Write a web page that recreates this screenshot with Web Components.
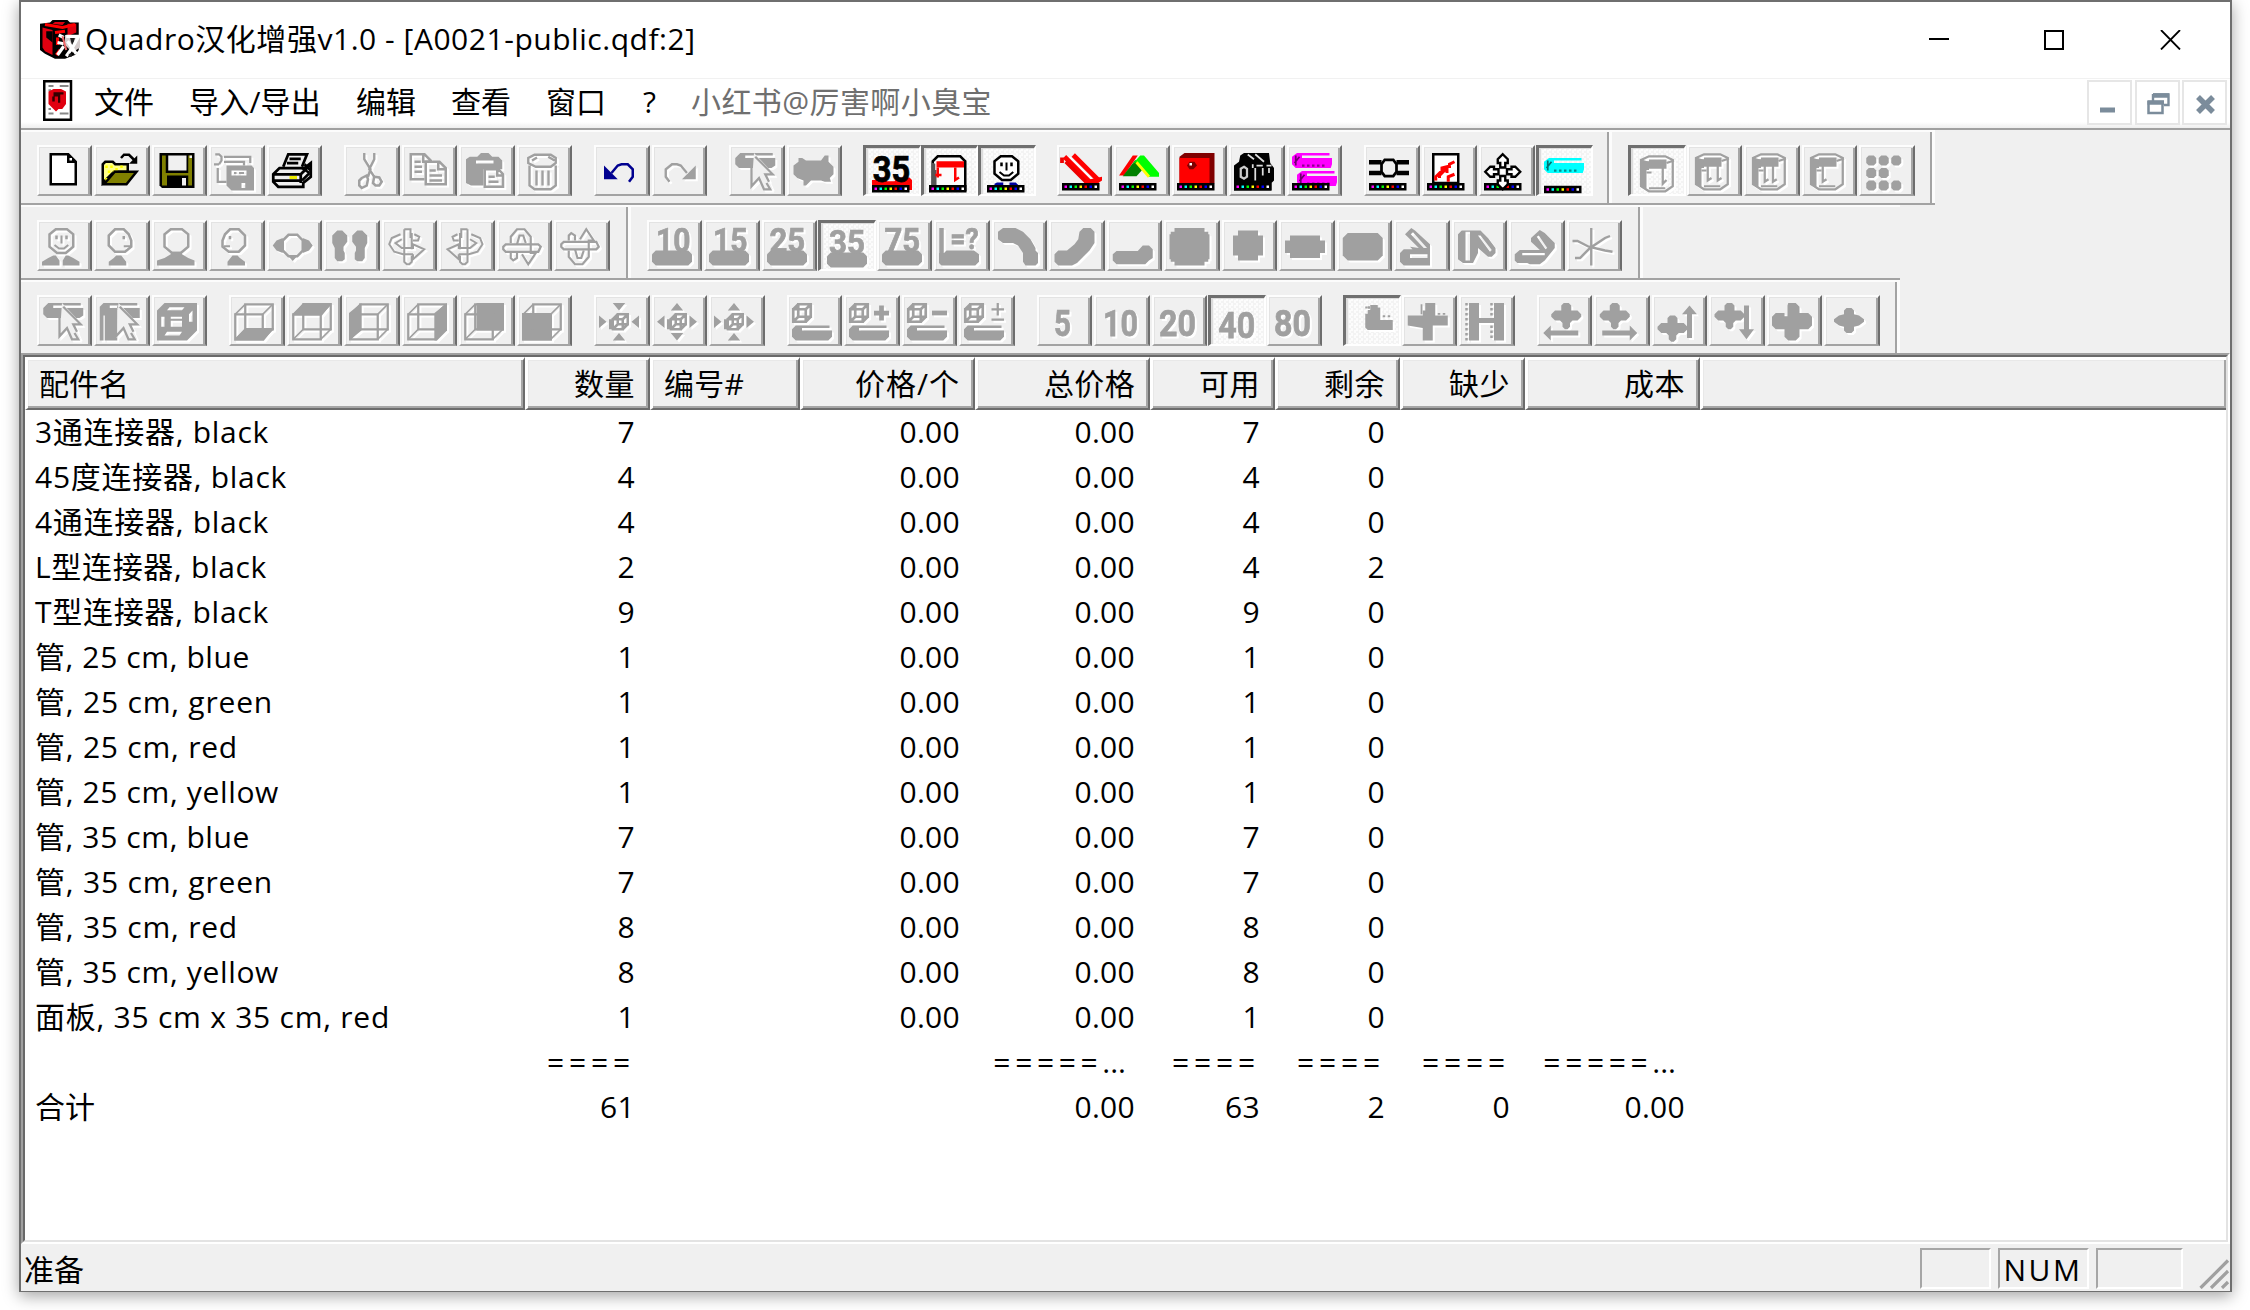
<!DOCTYPE html>
<html lang="zh-CN">
<head>
<meta charset="utf-8">
<title>Quadro汉化增强v1.0 - [A0021-public.qdf:2]</title>
<style>
html,body{margin:0;height:1310px;overflow:hidden;background:#fff}
body{font-family:"Open Sans","Noto Sans CJK SC",sans-serif;font-size:30px;color:#000}
app-window{margin-left:19px}
</style>
</head>
<body>
<app-window>
  <title-bar caption="Quadro汉化增强v1.0 - [A0021-public.qdf:2]"></title-bar>
  <menu-strip></menu-strip>
  <rebar-row style="--w:1914px">
    <tool-band style="--w:1586px" items="new open save saveall! print | cut! copy! paste! trash! | undo redo! | pick! blob! | len35* panel* person* | slide roof block wheel tubes | joint sheet spread tube*"></tool-band>
    <tool-band style="--w:318px;--p:17px" items="bucket1!* bucket2! bucket3! bucket4! dots!"></tool-band>
  </rebar-row>
  <rebar-row style="--w:1879px">
    <tool-band style="--w:604.5px" items="front! right! back! left! top! feet! roty! roty2! rotx! rotx2!"></tool-band>
    <tool-band style="--w:1007.5px;--p:16px" items="n10! n15! n25! n35!* n75! nq! bend1! bend2! bend3! sq1! sq2! sq3! sq4! k1! k2! k3! star!"></tool-band>
  </rebar-row>
  <rebar-row style="--w:1879px" last>
    <tool-band style="--w:1874px" items="pick! pick2! cube0! | cbottom! ctop! cleft! cright! cback! cfront! | zin! zout! zmix! | t0! tplus! tminus! tpm! | g5! g10! g20! g40!* g80! | corner!* cross! hshape! | mleft! mright! mup! mdown! mbig! msmall!"></tool-band>
  </rebar-row>
  <parts-list></parts-list>
  <status-bar></status-bar>
</app-window>

<script>
const make = (name, html, init) => customElements.define(name, class extends HTMLElement {
  constructor(){ super(); this.attachShadow({mode:'open'}); }
  connectedCallback(){ this.shadowRoot.innerHTML = typeof html === 'function' ? html(this) : html; if(init) init(this, this.shadowRoot); }
});

/* Spreads the letters of a label so that it takes a given width. */
const fit = root => root.querySelectorAll('[data-fit]').forEach(el => {
  const n = [...el.textContent].length, want = +el.dataset.fit;
  el.style.letterSpacing = '0';
  const w = el.getBoundingClientRect().width;
  const s = (want - w) / n;
  el.style.letterSpacing = s + 'px';
});

/* ---- icon set: 16x15 grid ---- */
const S = (d, w=1, c='currentColor') => `<path d="${d}" fill="none" stroke="${c}" stroke-width="${w}"/>`;
const F = (d, c='currentColor') => `<path d="${d}" fill="${c}" fill-rule="evenodd"/>`;
const FS = (d, f, c='currentColor', w=1) => `<path d="${d}" fill="${f}" stroke="${c}" stroke-width="${w}"/>`;
const T = (t, x, y, size, w) => `<text x="${x}" y="${y}" font-family="Roboto,sans-serif" font-weight="700" font-size="${size}" textLength="${w}" lengthAdjust="spacingAndGlyphs" fill="currentColor" stroke="currentColor" stroke-width=".3">${t}</text>`;
const G = (t, s) => `<g transform="${t}">${s}</g>`;
const R = (dx, s) => G(`translate(${dx} 0)`, s);
const flipX = s => G('translate(15.5 0) scale(-1 1)', s);
const strip = () => F('M0 12H15V15H0Z','#000') + ['#f0f','#0ff','#0f0','#ff0','#f00','#00f','#fff'].map((c,i)=>F(`M${1+2*i} 13h1v1h-1z`,c)).join('');
const base = F('M1.5 9H14.5L16 10.5V13.5L14.5 15H1.5L0 13.5V10.5Z');
const cubeWire = S('M.5 4.5H11.5V14.5H.5ZM4.5.5H15.5V10.5H4.5Z',.9) + S('M.5 4.5L4.5.5M11.5 4.5L15.5.5M.5 14.5L4.5 10.5M11.5 14.5L15.5 10.5',.7);
const cursor = '<path d="M7.500 0L16 9H12.500L15 14.500H11.500L10 10.500L6.500 14Z" fill="#f0f0f0" stroke="none"/>' + S('M6.5 2V13.3L9.5 10L11.5 14.5H14L12.5 12M8 1.5L15 8.5H12L13.5 11.5',.9);
const mini = S('M5.5 6.5H9.5V10.5H5.5ZM7.5 4.5H11.5V8.5H7.5ZM5.5 6.5L7.5 4.5M9.5 6.5L11.5 4.5M9.5 10.5L11.5 8.5M5.5 10.5L7.5 8.5M4.5 6.5V10.5',1);
const tubeBase = F('M1.5 9H15V10H4V11H16V13.5L14.5 15H1.5L0 13.5V10.5Z');
const smallCube = S('M.5 2.5H5.5V7.5H.5ZM2.5.5H7.5V5.5H2.5ZM.5 2.5L2.5.5M5.5 2.5L7.5.5M5.5 7.5L7.5 5.5M.5 7.5L2.5 5.5',1.05);
const head = 'M5.5.5H10L12.5 2.5V7.5L9.5 10H6L3 7.5V2.5Z';
const blobPlus = (x,y) => F(`M${x+5} ${y}h2l1 1v2h2.5l1.5 1.5v1l-1.5 1.5h-2l-1 1v1.5l-1 1h-1l-1-1v-1.5l-1-1h-2l-1.5-1.5v-1l1.5-1.5h2.5v-2z`);
const bucket = inner => R(.8, S('M4 .5H10.5L13.5 2V12.5L10.5 14.5H4L.8 12.5V2Z',.9) + F('M.5 2.5H4V6H3V13.5L.5 12.5Z') + F('M4 1.8H11V5.5H4Z') + S('M1 2.2L4 3.2M11 3.2L14 2.2M4 13.3H10.5M3 7H5',.8) + inner);
const person = S(head) + F('M5.3 3h1v1.5h-1zM9.3 3h1v1.5h-1z') + S('M7.8 3V6.2M5 6.8L6.8 8.2H8.8L10.5 6.8',.8);
const tubeC = (y,c) => F(`M2 ${y}H15V${y+1}H4V${y+2}H16V${y+4.5}L15.5 ${y+6}H1.500L0 ${y+4.5}V${y+1.5}Z`,c) + S(`M4 ${y+5}h1m1 0h1m1 0h1m1 0h1m1 0h1`,.9,'#00000070') + S(`M1.5 ${y+1}V${y+5}M3 ${y+1.5}L1 ${y+4}`,.7,'#00000090');
const rot = S('M6.5.5H9V4M6.5.5V4M6.5 11V13.5L7.5 14.5H8.5L9.5 13.5V11M6.5 2V11M9.5 2V8.5',.8) + S('M5 2.5L1.5 4L.5 6.5L2.5 9.5L6 10.5H10M5.5 4.500L3 6L5.5 8H10V6.5L14.5 8.5L10 12.5V10.5M10.5 2.5L12.5 3.5L12 5H10',.8);
const rotH = S('M1.5 6.5H14.5L15.5 7.5L14.5 9.5H1.5L.5 8.5V7.5Z',.9)+S('M3.5 6V3.5L6 .5H9L11.5 3.5V10H13.5L10.5 14.5L8 10.5M6 6.5L7 3H8.5L9.5 6M3.5 10V12L4.5 13L6 12V10',.85);
const profile = R(.4, S('M6 .5H9.5L11.5 2.5L12.5 5V7.5L10 9.5H6L3.5 7V3Z')+F('M9 3.2h1v1.3h-1z')+S('M9.5 7.3H12',.8)+F('M3.5 15V13.5L5.5 12L6.5 11H8.5L10.5 13.5V15Z'));

const ICONS = {
  new: FS('M3.5.5H10.5L13.5 3.5V12.5H3.5Z','#fff')+F('M10 0L14 4H10Z')+F('M11 2h1v1h-1z','#fff'),
  open: S('M8.8 2L10 .7H12L14 2.7')+F('M15.3 1V4.3H12Z')+FS('M1.5 12V4.5L2.5 3.5H5.5L6.5 4.5H11.5V7.5H6Z','#ff8')+F('M2.5 5h1v1h-1zm2 0h1v1h-1zm2 1h1v1h-1zm2-1h1v1h-1zm-5 2h1v1h-1zm0 3h-1v1h1zm2-3h1v1h-1z','#ff0')+FS('M2 12.5L6.3 7.5H15L11 12.5Z','#808000'),
  save: F('M1 0H15V14H2L1 13Z')+F('M2 1H14V13H2Z','#808000')+F('M3.5 0H12.5V8H3.500ZM4 9H12.5V14H4Z')+F('M4.5 1H11.8V7H4.500ZM10 10h1.6v3H10ZM13 1h1v1h-1z','#f0f0f0'),
  saveall: S('M.5.5H2L3 1.5V3L2 4.5M0 4.5h2M4 1.5H14.5V4M1.5 6V11.5H5M4 3.5H12V5',.9)+F('M5 5H15L16 6V15H7L5 13ZM7 7H13V9H7ZM11 12H12.5V14H11Z')+S('M8 8h1m1 0h2',.8),
  print: S('M4.5 5.5L6.5.5H14L12 5.5M7 2.3H11.5M6 4H10.5',1.1)+FS('M.5 8.5L3 6H13L15.5 4V9.5L12.5 12V13.5H2.5L.5 11.5Z','#f0f0f0','#000',1.1)+S('M.5 8.5H11.5L15 5M.5 11H12M11.5 8.5V12',1.1)+F('M7 9.2h3v1.2H7z','#ee0')+S('M12 6L15 8M13 4.5L15.5 7M12 11L15 8',1),
  cut: R(.6,S('M5.5 0V2.5L8 6.5L7 9.5M9.5 0V2.5L7.5 6.5L9.5 9.5',.95)+S('M4.5 10L6.5 9L7 10.5L6.5 13L4.5 14L3.5 13V11ZM9.5 9.5L11.5 9.8L12.5 11.5L11.5 13L10 13L9 12Z')),
  copy: R(1,S('M6 10.5H.5V.5H6L8.5 3V4M2 3.5H4.500M2 5.5H5M2 7.5H5M5.5.5V3.5H8',1)+S('M6.5 3.5H12L14.5 6V12.5H6.5ZM11.5 3.5V6.5H14.5M8 7H10.5M8 9H13M8 11H13',1)),
  paste: R(.8,F('M1.500 1.500H4.5L6 0H9L10.5 1.5H13L14.500 3V6.500H7V13H2L0 12V2.5ZM4 3V4.2H11V3Z')+S('M7.5 6.500H13L14.8 8.5V13.5H7.5ZM9 9.5H11.5M9 11.5H13M12.500 6.5V9H14.5')),
  trash: R(1,S('M4 .7H10.500L12.5 2V4L10.5 5.5H4.5L1.5 4V2ZM2 5V13L4 14.5H10.500L12.500 13V5M4.8 7V13M7.2 7V13M9.6 7V13M3 3L5 1.8M9.500 1.5L12 3',.95)),
  undo: F('M2 5V10.5H7.5Z','#000090')+S('M5 8L7.5 5L9 4.5H11.5L13.5 6.5V9.5L12 11.5',1,'#000090'),
  redo: R(1,F('M14.500 5V10.5H9Z')+S('M11 8L8.5 5L7 4.5H5L2.500 6.5V9.5L4 11.5',.95)),
  pick: R(.5,F('M2 0H15V1H4V2H16V5L14.5 6H1.5L0 4.5V2Z')+cursor),
  pick2: R(.3,F('M1.5 0H15V1H4V2H16V6H12L7 1V15H2V5H1.5V15H0V1.5Z')+cursor),
  blob: R(.6,F('M2 2H3.5L5 3H11L12.5 1H14V3.5L16 5.5V8.5L14.5 10L15 11.5H12.5L11 11H7L5 13H4V11L1.5 10L0 8.5V5L2 3.5Z')),
  len35: F('M0 10H2L3 9H5L6 10.5H9L10 9H15L16 10V14H0Z','#f00')+T('35',.3,10.7,14.9,15)+strip(),
  panel: FS('M3.5 .5H12.5L14.5 2.5V14H1.5V2.500Z','#fbfbfb')+F('M3 2.5H14V5H3Z','#f00')+F('M1 3V12H3V6H2.5V3.5Z','#555')+S('M3.5 5V9M2.5 8H5M10.5 5V10L12 9',1,'#f00')+strip(),
  person: person.replace(/currentColor/g,'#000').replace('fill="none"','fill="#fff"')+F('M3 12V11.5L4 11H6.5V12ZM9 12V11H11.5L12.5 12Z','#0000a0')+strip(),
  slide: S('M1 1.5L12 12.5M4.5.8L15 11.3',1.9,'#f00')+S('M1.5 3.5L12 14M0 1.8V4',1.5,'#e00')+S('M3 1.5L14 12.5',.6,'#fff')+F('M9 11L16 9.5V11L13 13H9Z','#f00')+strip(),
  roof: F('M0 9L5.5 1H7.5L2 9Z','#f00')+F('M1.500 9.3L6.5 2.8L10 6L7 9.3Z','#008000')+F('M5.5 4.3L8.5 1H10L16 8V9.5H12L7 3.6Z','#0f0')+S('M7 3.7L12 9.5',1.1,'#ff0')+strip(),
  block: F('M1 1.5L3 0H15V12L13 14H1Z','#800000')+F('M1 2H13V13H1Z','#f00')+F('M5 3.5H7L8 5L6.5 6.5H5L4 5Z','#800000')+F('M5 4h1v1H5z','#fff')+strip(),
  wheel: F('M0 5L2 3.5L2.500 1L4 0H14L14.500 4L16 6V11L15 12V15H0Z')+S('M4 5.5L5.2 6.300V9.5L4 10.300L2.700 9.500V6.300Z',.9,'#ccc')+S('M5.5.6L8 2.500M8.500.500L12 3.5M7.500 4.500V6M9 5H11.500M13 5H15M8.500 6V11M11.500 6V9M14 6V8',.7,'#ddd')+strip(),
  tubes: tubeC(0,'#f0f')+R(2,tubeC(7.2,'#f0f'))+strip(),
  joint: S('M0 3.7H5M11 3.7H16M0 8H5M11 8H16',1.8)+FS('M6.3 2.7H9.7L11 4.5V7.5L9.7 9.2H6.3L5 7.5V4.5Z','#f0f0f0','#000',1.1)+strip(),
  sheet: FS('M2.500.5H12.500V12H2.500Z','#fff')+S('M3.500 11V9.500L5 8V10M6 7.5V6L8 5.5V8M9 6V4.5L11 3.5M8.500 11.5V9.5L11 8.500M5 9L8 6',1.2,'#f00')+strip(),
  spread: strip()+['M7.500 .500L9.500 2.500V4H8.500V5.800H6.500V4H5.500V2.500Z','M.5 7.5L2.5 5.5H4V6.500H5.800V8.500H4V9.5H2.5Z','M14.5 7.5L12.5 5.500H11V6.500H9.200V8.500H11V9.500H12.500Z','M7.5 14.5L9.5 12.5V11H8.5V9.2H6.5V11H5.5V12.5Z'].map(d=>FS(d,'#fff','#000',.95)).join('')+F('M6.7 6.7h1.6v1.6h-1.6z','#fff'),
  tube: tubeC(1.2,'#0ff')+G('translate(0 .3)',strip()),
  bucket1: bucket(S('M9.5 5V11.5L11 10',.9)),
  bucket2: bucket(S('M5.5 5V11L7 10M9.500 5V11L11 10',.9)),
  bucket3: bucket(S('M5.5 5V11.5L7 10.500M8.800 5V11.5L10.300 10.500',.9)),
  bucket4: bucket(S('M5.5 5V11.5L7 10.500',.9)),
  dots: R(.9,[[0,1],[5,1],[10,1],[0,6],[5,6],[0,11],[5,11],[10,11]].map(([x,y])=>F(`M${x+1} ${y}h2l1 1v2l-1 1h-2l-1-1v-2z`)).join('')),
  front: person+F('M0 15V13.5L2.5 12L4.5 11H5.5L7 13V15ZM15 15V13.5L12.5 12L10.5 11H9.5L8.3 13V15Z'),
  right: profile,
  back: S(head)+F('M0 15V13L3 12L5.5 10.5V9.5H10V10.5L12.5 12L15 13V15Z'),
  left: R(.8,flipX(profile)),
  top: R(.3,F('M0 7L1.5 5L4 4V10L1.5 9ZM16 7L14.5 5L12 4V10L14.5 9ZM6 11H10L8 13.2Z')+S('M6.3 2.7H9.8L12 5V9L9.8 11.3H6.3L4 9V5Z')),
  feet: R(.3,F('M3 1H5L7 3V5.5L5.5 7.5V9L6 10V12.5L5 13.3H3L2 12V8L1 6V3ZM11 1H13L15 3V6L14 8V12L13 13.3H11L10 12.5V10L10.5 9V7.5L9 5.5V3Z')),
  roty: R(.4,rot), roty2: R(.4,flipX(rot)), rotx: rotH, rotx2: R(.4,G('translate(0 15) scale(1 -1)', rotH)),
  n10: base+T('10',1.6,9.6,13.6,13.8), n15: base+T('15',1.6,9.6,13.6,13.8), n25: base+T('25',1,9.6,13.600,14.3), n35: base+T('35',.8,9.6,13.6,14.4), n75: base+T('75',1,9.6,13.6,14.3),
  nq: F('M0 10H2L3 9H14L16 10.500V13.5L14.5 15H1L0 14Z')+S('M1 0V12',1.8)+T('=?',4.5,8.3,12,11.3),
  bend1: R(.4,F('M2 0H7L10 1.5L13 4.5L15 8V9L16 10V14L15 15H11L10 13.5V10L8 7L6 6H2L0 4.5V1.5Z')),
  bend2: R(.2,F('M11.5 0H14.5L16 1.5V6L14 9L12 11L9 14L7 15H1.5L0 13.5V10.5L1.5 9H5L8 6.5L9.5 4.5L10 1.5Z')),
  bend3: R(.3,F('M1.5 9.2H10L12 7H14.5L16 8.5V12L14.5 13L13 14.5H1.5L0 13V10.5Z')),
  sq1: R(.2,F('M2 0H14V1.5H15.5V2.5H16V12.5H15.5V13.5H14V15H2V13.5H.5V12.5H0V2.5H.5V1.5H2Z')),
  sq2: R(.4,F('M4 1H12V3H14V11H12V13H4V11H2V3H4Z')),
  sq3: R(.4,F('M2 3H14V5H16V10H14V12H2V10H0V5H2Z')),
  sq4: R(.3,F('M2 2H14L16 4V11L14 13H2L0 11V4Z')),
  k1: R(.4,F('M1.5 8.5H5L4 7.500L7.5 8L2 2.500L4.5 0L6 1L12 6.500V15H1.5L0 13.5V10ZM4 10.5V12H11V10.5ZM4.300 2.500L9.500 8H10.800L5.200 1.700Z')),
  k2: R(.4,F('M1.5 1H9L12 4L15 8V10L13.5 11.5H12L8 8V10L6 14H2L0 12.5V2.5ZM3 1.5V13H4.8V1.5ZM8 3L12.8 9.500L13.5 8.800L9 3Z')),
  k3: R(.3,F('M0 10.500L2 8.800H10L6.500 5.500V4L10 .8L12 2L16 6V8L12 13L10 14.5H6L5 14H1L0 13ZM3 10V10.900H12V10ZM8.800 3.500L12.300 8.500L13 8L9.600 3Z')),
  star: R(.2,S('M7.5 0V15M0 5.2H2L6.5 7.5L13 9L16 9.5M1 12H3L7 8L13 4L15 3.2',.95)),
  cube0: F('M3 0H16V11L12 15H0V3ZM5 1.700L4 2.900H10L11 1.700ZM14.200 3L12.8 4.500V7.500H14.200ZM1.7 5.500V9.500H3V5.500ZM5.500 5.500V9.5H10V5.500ZM4 11.5L3 13H9L10 11.5Z')+S('M5 6.700H10',.8),
  cbottom: F('M0 15L4.5 10H16L12 15Z')+cubeWire, ctop: F('M0 5L4.5 0H16L12 5Z')+cubeWire,
  cleft: F('M0 4L5 0V11L0 15Z')+cubeWire, cright: F('M11 4L16 0V11L12 15H11Z')+cubeWire,
  cback: F('M5 0H16V11H5Z')+cubeWire, cfront: F('M0 4H12V15H0Z')+cubeWire,
  zin: mini+F('M5.5 0H10.5L8 3ZM5.5 15H10.5L8 12ZM0 5L3 7.5L0 10ZM16 5L13 7.5L16 10Z'),
  zout: mini+F('M5.5 3H10.5L8 0ZM5.5 12H10.5L8 15ZM3 5L0 7.5L3 10ZM13 5L16 7.5L13 10Z'),
  zmix: mini+F('M5.5 3H10.5L8 0ZM5.5 15H10.5L8 12ZM0 5L3 7.5L0 10ZM13 5L16 7.5L13 10Z'),
  t0: smallCube+tubeBase, tplus: smallCube+tubeBase+S('M13 1V7M10 4H16',1.9), tminus: smallCube+tubeBase+S('M10 4H16',1.9),
  tpm: smallCube+tubeBase+S('M13.5 0V5M11 2.5H16M11 6.6H16',.9),
  g5: T('5',4.8,13,15,6.8), g10: T('10',1.6,13,15,14), g20: T('20',.8,13,15,14.8), g40: T('40',.5,13,15,14.8), g80: T('80',.8,13,15,14.8),
  corner: R(2.3,F('M5 0H8V1L9 1V6H14V10H4L3 9V3.5H4V2H5Z')+S('M3 1h1M4.5 .5v1M10 4.5h1M12 4.5h1',.8)),
  cross: R(.3,F('M7 0H11V5H16V9H10V15H6V10L0 9V5H6V3H7Z')+S('M5.5.5v4M12 4.3h1m1 0h1',.7)),
  hshape: F('M2 0H6V6H12V0H16V15H12V8H6V15H2Z')+'<path d="M1 0V15M11 0V5M11 9V15" stroke="currentColor" stroke-dasharray="1 1" fill="none"/>',
  mleft: R(.5,blobPlus(3.2,0)+F('M0 12L3 9V11H14V13H3V15Z')), mright: R(.3,blobPlus(0,0)+F('M15 12L12 9V11H1V13H12V15Z')),
  mup: blobPlus(.2,5)+F('M13 1L16 4.5H14V14H12V4.5H10Z'), mdown: blobPlus(.2,0)+F('M13 14.5L16 10.5H14V1H12V10.5H10Z'),
  mbig: F('M6.5 0H9.5L11 1.5V4H14.5L16 5.5V9L14.5 10.5H11V13.5L9.5 15H6.5L5 13.5V10.5H1.5L0 9V5.5L1.5 4H5V5.3H6.200V1Z'),
  msmall: F('M7 2H9L10 3V4.500L12 5L14 6.500V7.500L12 9L10 9.500V11L9 12H7L6 11V9.500L4 9L2 7.500V6.500L4 5L6 4.500V3Z')
};

make('tool-button', el => `<style>
:host{display:block;box-sizing:border-box;width:55.5px;height:50.5px;margin-right:2px;background:#f0f0f0;
 border-style:solid;border-width:2px;border-color:#fdfdfd #6d6d6d #a3a3a3 #fdfdfd;
 box-shadow:inset 1px 1px 0 #e3e3e3,inset -2px 0 0 #a6a6a6;padding:5.3px 0 0 3.3px}
:host([pressed]){width:57.5px;margin:0;margin-left:-1px;margin-right:1px;border-width:3px 2px 2px 3px;border-color:#6f6f6f #fff #fff #6f6f6f;
 box-shadow:inset 2px 1px 0 #dcdcdc;padding:6.5px 0 0 5.6px;background:repeating-conic-gradient(#f3f3f3 0 25%,#fcfcfc 0 50%) 0 0/5px 5px}
svg{display:block;width:40px;height:37.5px;overflow:visible;color:#000}
:host([off]) svg{color:#a0a0a0;filter:drop-shadow(2.5px 2.5px 0 #fff)}
</style><svg viewBox="0 0 16 15">${ICONS[el.getAttribute('icon')]}</svg>`);

make('tool-band', el => `<style>
:host{display:flex;box-sizing:border-box;width:calc(var(--w) + 5px);flex:none;padding:13.3px 0 0 var(--p,15.5px);
 border-right:3px solid #fcfcfc;box-shadow:inset -2px 0 0 #a3a3a3}
i{width:20px;flex:none}tool-button{flex:none}
</style>` + el.getAttribute('items').split(' ').map(t => t==='|' ? '<i></i>' :
  `<tool-button icon="${t.replace(/[!*]/g,'')}"${t.includes('!')?' off':''}${t.includes('*')?' pressed':''}></tool-button>`).join(''));

make('rebar-row', `<style>
:host{display:flex;box-sizing:border-box;height:75px;width:var(--w);border-top:2px solid #fcfcfc;border-bottom:2px solid #a3a3a3;flex:none}
:host([last]){height:73px;border-bottom:0}
</style><slot></slot>`);

make('app-window', `<style>
:host{display:flex;flex-direction:column;box-sizing:border-box;width:2213px;height:1292px;background:#f0f0f0;
 border:2px solid #6f6f6f;border-bottom-width:1px;box-shadow:0 4px 15px rgba(0,0,0,.36)}
</style><slot></slot>`);

make('title-bar', el => `<style>
:host{display:flex;align-items:center;height:76px;background:#fff;flex:none;padding-left:19px;box-sizing:border-box}
svg{display:block;flex:none}.cap{margin-left:5px;white-space:pre;line-height:50px;padding-bottom:2px}
.sp{flex:1}.b{display:flex;gap:95px;padding-right:49px}
</style>
<svg width="40" height="40" viewBox="0 0 16 16"><path d="M0 1.5L4 1L5 0H11L12 1H15.5V12L14 14L10 15.5H6L2 13.5L0 12Z" fill="#000"/>
<path d="M1 3L5 4V14L2 12.5L1 11ZM5 1.5L6 .8H10L9 2ZM11 1.5H14.5V5L11 6.5Z" fill="#e00010"/><path d="M2.5 4.5H5V9L2.5 7ZM6 5L10 4V7L8 8V14H6Z" fill="#000"/>
<path d="M2 1.8L9 3L14 1.8M6 5L10 4.5M7 7V10M8 12L6.5 14" stroke="#f00" stroke-width="1.2" fill="none"/>
<path d="M10 6H16V11L13 13L10 10Z" fill="#d4cccc"/><path d="M12 7H14L13 11Z" fill="#222"/><path d="M7.5 6L9.5 7M7 9L9.500 9.500M7 14L9.500 10.500M10.500 6.500H15.500L13 11L10.500 14.500M11 8.500L14.500 13.500" stroke="#fff" stroke-width="1.3" fill="none"/><path d="M9 6.500L10.500 12" stroke="#e66" stroke-width=".8"/><path d="M11.500 13.500h1.2v1.2h-1.200z" fill="#222"/></svg>
<span class="cap" data-fit="610.5">${el.getAttribute('caption')}</span><span class="sp"></span>
<div class="b"><svg width="20" height="20"><path d="M0 9H20" stroke="#000" stroke-width="2"/></svg>
<svg width="20" height="20"><path d="M1 1H19V19H1Z" fill="none" stroke="#000" stroke-width="2"/></svg>
<svg width="22" height="20"><path d="M2 0L21 19.500M21 0L2 19.500" stroke="#000" stroke-width="1.8"/></svg></div>`, (el,r) => fit(r));

make('menu-strip', `<style>
:host{display:flex;box-sizing:border-box;height:52px;flex:none;border-top:1px solid #f1f1f1;border-bottom:2px solid #a0a0a0;background:linear-gradient(#fff 43px,#eee 49px);padding-left:20px;align-items:flex-start}
svg{display:block;flex:none}.m{display:flex;margin-left:21px;gap:35px;line-height:46px}.m span{white-space:pre}
.q{margin-left:2px}.g{color:#6f6f6f;margin-left:-2px}
.c{display:flex;gap:2.5px;margin-left:auto;padding:1px 3px 0 0}.c div{box-sizing:border-box;width:45px;height:45px;border:2px solid #e6e6e6;background:#fff}
</style>
<svg width="32" height="42" viewBox="0 0 12.8 16.8"><path d="M1.300 .9H12V16.3H1.300Z" fill="#fff" stroke="#000"/><path d="M3 2.8H5M7.5 2.8H11M3 13.8H5M7.5 13.8H11M3 4.5H4M3 12H4" stroke="#888" stroke-width=".8"/><path d="M3 5L5 4H8L10 5V10L8.500 12H7L6 13L5 12L3 10Z" fill="#e00010"/><path d="M4.500 7H5.500V9H4.500ZM5 5.300H9V6.200H7.700V9.500H6.800V7H5Z" fill="#300"/></svg>
<div class="m"><span data-fit="60">文件</span><span data-fit="132">导入/导出</span><span data-fit="60">编辑</span><span data-fit="60">查看</span><span data-fit="60">窗口</span><span class="q" data-fit="15">?</span><span class="g" data-fit="301">小红书@厉害啊小臭宝</span></div>
<div class="c"><div><svg width="41" height="41"><path d="M11 28H26" stroke="#7b8c9b" stroke-width="5"/></svg></div>
<div><svg width="41" height="41"><path d="M16 12.5H31.5V23H27M16 12V20" fill="none" stroke="#7b8c9b" stroke-width="2.4"/><path d="M16 13.5H32" stroke="#7b8c9b" stroke-width="4.5"/><path d="M11.5 20H25.5V31H11.5Z" fill="#fff" stroke="#7b8c9b" stroke-width="2.5"/><path d="M10.5 20.5H27" stroke="#7b8c9b" stroke-width="4.5"/></svg></div>
<div><svg width="41" height="41"><path d="M14 15L29 30M29 15L14 30" stroke="#7b8c9b" stroke-width="5.5"/></svg></div></div>`, (el,r) => fit(r));

const COLS = [500,125,150,175,175,125,125,125,175];
const HEADS = ['配件名','数量','编号#','价格/个','总价格','可用','剩余','缺少','成本'];
const HW = [90,61,80,105,91,61,61,61,61];
const ROWS = [
 ['3通连接器, black',7,7,0,234],['45度连接器, black',4,4,0,252],['4通连接器, black',4,4,0,234],['L型连接器, black',2,4,2,232],['T型连接器, black',9,9,0,234],
 ['管, 25 cm, blue',1,1,0,215],['管, 25 cm, green',1,1,0,238],['管, 25 cm, red',1,1,0,203],['管, 25 cm, yellow',1,1,0,244],
 ['管, 35 cm, blue',7,7,0,215],['管, 35 cm, green',7,7,0,238],['管, 35 cm, red',8,8,0,203],['管, 35 cm, yellow',8,8,0,244],['面板, 35 cm x 35 cm, red',1,1,0,355]];
const line = cells => `<div class="row">${cells.map(c=>`<div class="cell">${c===''?'':`<span data-fit="${c[1]}"${c[2]?` class="${c[2]}"`:''}>${c[0]}</span>${c[3]||''}`}</div>`).join('')}</div>`;
const n = v => [v, String(v).length*17.5], money = ['0.00',60.5], eq = ['====',88,''], cut = ['=====',109,'','<span class="d">...</span>'];
make('parts-list', () => `<style>
:host{display:flex;flex-direction:column;box-sizing:border-box;height:890.5px;flex:none;background:#fff;border:2px solid;border-color:#a0a0a0 #fff #fff #a0a0a0}
.in{flex:1;border:2px solid;border-color:#696969 #e3e3e3 #e3e3e3 #696969}
.head,.row{display:grid;grid-template-columns:${COLS.map(c=>c+'px').join(' ')} 1fr}
.head div{box-sizing:border-box;height:52.5px;background:#f0f0f0;border-style:solid;border-width:3px 2px 2px 3px;border-color:#fff #6c6c6c #6c6c6c #fff;box-shadow:inset -2px -2px 0 #a6a6a6,inset 1px 1px 0 #e8e8e8;padding:0 13px 0 11px;line-height:47px;text-align:right;white-space:pre}
.head div:nth-child(1),.head div:nth-child(3){text-align:left}.head div:last-child{border-right:0}
.row{height:45px}.cell{padding:0 15px 0 10px;line-height:44px;text-align:right;white-space:pre}.cell:first-child{text-align:left}
span{display:inline-block;line-height:inherit}.d{margin-right:9px}
</style><div class="in"><div class="head">${HEADS.map((h,i)=>`<div><span data-fit="${HW[i]}">${h}</span></div>`).join('')}<div></div></div>
${ROWS.map(r=>line([[r[0],r[4]],n(r[1]),'',money,money,n(r[2]),n(r[3])])).join('')}
${line(['',eq,'','',cut,eq,eq,eq,cut])}
${line([['合计',60],n(61),'','',money,n(63),n(2),n(0),money])}</div>`, (el,r) => fit(r));

make('status-bar', `<style>
:host{display:flex;flex:1;background:#f0f0f0;box-sizing:border-box;padding:4px 0 0 3px;min-height:0}
.t{flex:1;line-height:43px}.p{box-sizing:border-box;height:41px;border:2px solid;border-color:#a6a6a6 #fff #fff #a6a6a6;line-height:39px;padding-left:4px;margin-left:7px}
svg{display:block;margin:11px 0 0 15.5px;flex:none}
</style><div class="t"><span data-fit="60">准备</span></div><div class="p" style="width:71px"></div><div class="p" style="width:91px"><span data-fit="79">NUM</span></div><div class="p" style="width:87px"></div>
<svg width="32" height="30"><path d="M2.500 29L30 1.500M13 29L30 12M24 29L30 23" stroke="#a0a0a0" stroke-width="3.200"/></svg>`, (el,r) => fit(r));
</script>
</body>
</html>
